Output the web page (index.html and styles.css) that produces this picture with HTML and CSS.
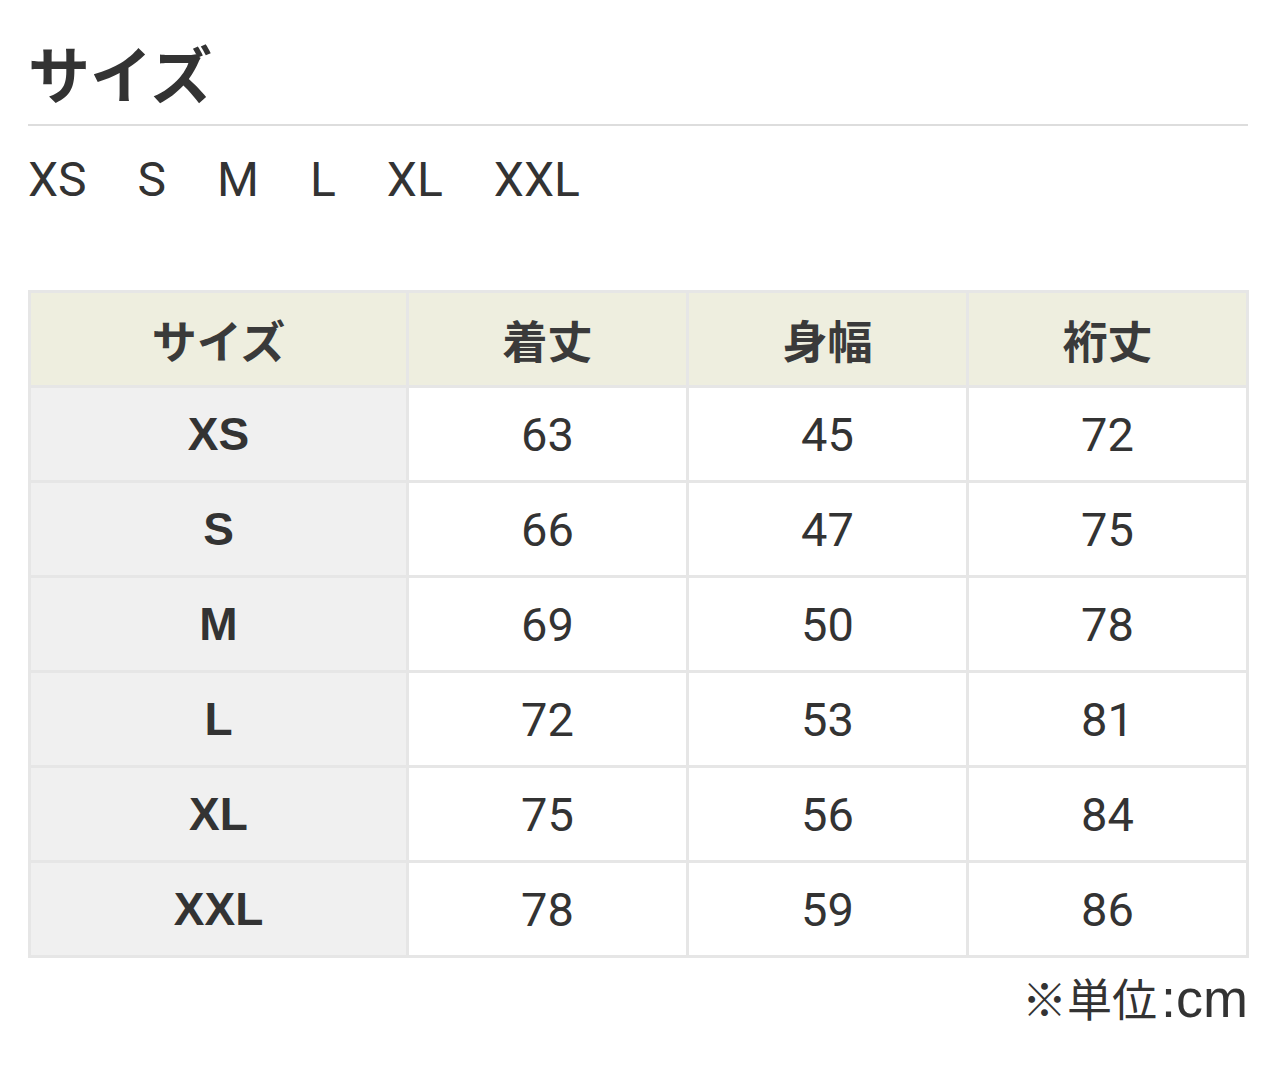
FILE: index.html
```html
<!DOCTYPE html>
<html lang="ja">
<head>
<meta charset="utf-8">
<title>サイズ</title>
<link rel="stylesheet" href="styles.css">
</head>
<body>
<section class="size-section">
  <h2 class="title">サイズ</h2>
  <ul class="size-list">
    <li>XS</li>
    <li>S</li>
    <li>M</li>
    <li>L</li>
    <li>XL</li>
    <li>XXL</li>
  </ul>
  <table class="size-table">
    <colgroup>
      <col class="c-size">
      <col class="c-val">
      <col class="c-val">
      <col class="c-val">
    </colgroup>
    <thead>
      <tr><th>サイズ</th><th>着丈</th><th>身幅</th><th>裄丈</th></tr>
    </thead>
    <tbody>
      <tr><th>XS</th><td>63</td><td>45</td><td>72</td></tr>
      <tr><th>S</th><td>66</td><td>47</td><td>75</td></tr>
      <tr><th>M</th><td>69</td><td>50</td><td>78</td></tr>
      <tr><th>L</th><td>72</td><td>53</td><td>81</td></tr>
      <tr><th>XL</th><td>75</td><td>56</td><td>84</td></tr>
      <tr><th>XXL</th><td>78</td><td>59</td><td>86</td></tr>
    </tbody>
  </table>
  <p class="note">※単位<span class="unit">:cm</span></p>
</section>
</body>
</html>
```

FILE: styles.css
```css
html, body {
  margin: 0;
  padding: 0;
  background: #ffffff;
}

body {
  color: #333333;
  font-family: Roboto, "Noto Sans CJK JP", sans-serif;
}

.size-section {
  width: 1220px;
  padding: 0 0 0 28px;
}

.title {
  margin: 0;
  padding-top: 28px;
  padding-bottom: 8px;
  font-family: "Noto Sans CJK JP", sans-serif;
  font-size: 62px;
  font-weight: 700;
  line-height: 88px;
  color: #333333;
  border-bottom: 2px solid #dddddd;
}

.size-list {
  list-style: none;
  margin: 0;
  padding: 0;
  display: flex;
  gap: 51px;
  font-family: Roboto, sans-serif;
  font-size: 48px;
  line-height: 108px;
  color: #333333;
}

.size-table {
  margin-top: 56px;
  width: 1220px;
  border-collapse: collapse;
  table-layout: fixed;
  border: 3px solid #e6e6e6;
}

.c-size { width: 378px; }
.c-val { width: 280px; }

.size-table th,
.size-table td {
  border: 3px solid #e6e6e6;
  height: 92px;
  padding: 0;
  text-align: center;
  vertical-align: middle;
}

.size-table thead th {
  background: #eeeedf;
  font-family: "Noto Sans CJK JP", sans-serif;
  font-size: 45px;
  font-weight: 700;
  color: #3a3a3a;
}

.size-table tbody th {
  background: #f0f0f0;
  font-family: "Liberation Sans", Arial, sans-serif;
  font-size: 46px;
  font-weight: 700;
  color: #333333;
}

.size-table td {
  background: #ffffff;
  font-family: Roboto, sans-serif;
  font-size: 47px;
  color: #333333;
}

.note {
  margin: 10px 0 0 0;
  text-align: right;
  font-family: "Noto Sans CJK JP", sans-serif;
  font-size: 45px;
  line-height: 60px;
  color: #333333;
}

.unit {
  font-family: "Liberation Sans", Arial, sans-serif;
  font-size: 54px;
  margin-left: 4px;
}
```
